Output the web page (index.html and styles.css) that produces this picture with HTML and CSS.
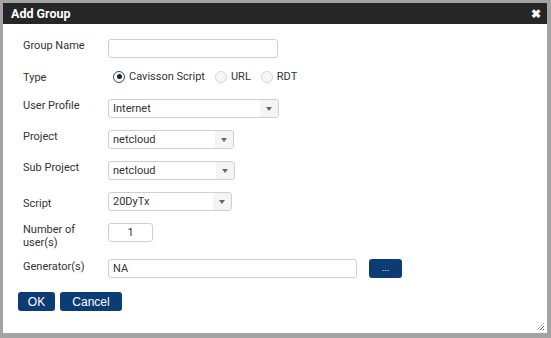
FILE: index.html
```html
<!DOCTYPE html>
<html lang="en">
<head>
    <meta charset="UTF-8">
    <title>Add Group</title>
    <link rel="stylesheet" href="styles.css">
</head>
<body>
    <div class="dialog">
        <div class="titlebar">
            <span class="title">Add Group</span>
            <span class="close">&#10006;</span>
        </div>
        <div class="content">
            <div class="row r-name">
                <label>Group Name</label>
                <div class="field text w-name"></div>
            </div>
            <div class="row r-type">
                <label>Type</label>
                <div class="radios">
                    <span class="radio checked"></span><span class="rlabel">Cavisson Script</span>
                    <span class="radio"></span><span class="rlabel">URL</span>
                    <span class="radio"></span><span class="rlabel">RDT</span>
                </div>
            </div>
            <div class="row r-profile">
                <label>User Profile</label>
                <div class="field select w-profile"><span>Internet</span><i class="arrow"></i></div>
            </div>
            <div class="row r-project">
                <label>Project</label>
                <div class="field select w-project"><span>netcloud</span><i class="arrow"></i></div>
            </div>
            <div class="row r-sub">
                <label>Sub Project</label>
                <div class="field select w-sub"><span>netcloud</span><i class="arrow"></i></div>
            </div>
            <div class="row r-script">
                <label class="low">Script</label>
                <div class="field select w-script"><span>20DyTx</span><i class="arrow"></i></div>
            </div>
            <div class="row r-users">
                <label>Number of<br>user(s)</label>
                <div class="field text w-users center">1</div>
            </div>
            <div class="row r-gen">
                <label>Generator(s)</label>
                <div class="field text w-gen"><span class="gen">NA</span></div>
                <button class="btn dots">...</button>
            </div>
            <div class="actions">
                <button class="btn ok">OK</button>
                <button class="btn cancel">Cancel</button>
            </div>
        </div>
        <div class="grip"></div>
    </div>
</body>
</html>
```

FILE: styles.css
```css
html, body {
    margin: 0;
    height: 100%;
}
body {
    background: #a3a3a3;
    font-family: Roboto, "Liberation Sans", sans-serif;
    font-size: 11px;
    color: #333;
}
.dialog {
    position: relative;
    margin: 3px 4px 0 3px;
    height: 330px;
    background: #fff;
}
.titlebar {
    height: 21px;
    background: #262626;
    color: #fff;
    display: flex;
    align-items: center;
    justify-content: space-between;
    padding: 0 6px 0 8px;
}
.title {
    font-weight: bold;
    font-size: 12.5px;
}
.close {
    font-size: 12px;
    font-weight: bold;
}
.content {
    padding: 0 0 0 20px;
}
.row {
    display: flex;
    align-items: flex-start;
}
.row label {
    width: 85px;
    line-height: 13px;
}
.row label.low {
    padding-top: 5px;
}
.r-name { margin-top: 15px; }
.r-type { margin-top: 13px; }
.r-profile { margin-top: 15px; }
.r-project { margin-top: 12px; }
.r-sub { margin-top: 12px; }
.r-script { margin-top: 12px; }
.r-users { margin-top: 12px; }
.r-gen { margin-top: 10px; }
.r-gen label { padding-top: 1px; }
.field {
    box-sizing: border-box;
    height: 19px;
    border: 1px solid #cfcfcf;
    border-radius: 3px;
    background: #fff;
    display: flex;
    align-items: center;
    color: #333;
}
.w-name { width: 170px; }
.w-profile { width: 171px; }
.w-project { width: 126px; }
.w-sub { width: 127px; }
.w-script { width: 124px; }
.w-users { width: 45px; }
.w-gen { width: 249px; }
.center { justify-content: center; }
.select span, .gen {
    flex: 1;
    padding-left: 4px;
}
.arrow {
    width: 18px;
    height: 100%;
    background: #f4f4f4;
    border-radius: 0 3px 3px 0;
    display: flex;
    align-items: center;
    justify-content: center;
}
.arrow::after {
    content: "";
    border-left: 3.5px solid transparent;
    border-right: 3.5px solid transparent;
    border-top: 4px solid #666;
}
.radios {
    display: flex;
    align-items: center;
    margin-left: 5px;
    margin-top: -1px;
}
.radio {
    box-sizing: border-box;
    width: 12px;
    height: 12px;
    border-radius: 50%;
    border: 1px solid #d6d6d6;
    background: #f6f6f6;
    margin-right: 4px;
    position: relative;
}
.radio.checked {
    border-color: #1d4e7e;
    background: #fff;
}
.radio.checked::after {
    content: "";
    position: absolute;
    left: 2.5px;
    top: 2.5px;
    width: 5px;
    height: 5px;
    border-radius: 50%;
    background: #222;
}
.rlabel {
    margin-right: 10px;
}
.btn {
    background: #0c3c74;
    color: #fff;
    border: none;
    border-radius: 3px;
    font-family: "Liberation Sans", Arial, sans-serif;
    font-size: 12px;
    height: 19px;
    padding: 0;
    cursor: pointer;
}
.dots {
    margin-left: 12px;
    width: 33px;
    font-size: 9px;
    line-height: 19px;
}
.actions {
    display: flex;
    gap: 5px;
    margin-top: 14px;
    margin-left: -5px;
}
.ok { width: 37px; }
.cancel { width: 62px; }
.grip {
    position: absolute;
    right: 3px;
    bottom: 3px;
    width: 7px;
    height: 7px;
    background: repeating-linear-gradient(135deg, transparent 0 1.5px, #555 1.5px 2.5px);
    clip-path: polygon(100% 0, 100% 100%, 0 100%);
}
```
